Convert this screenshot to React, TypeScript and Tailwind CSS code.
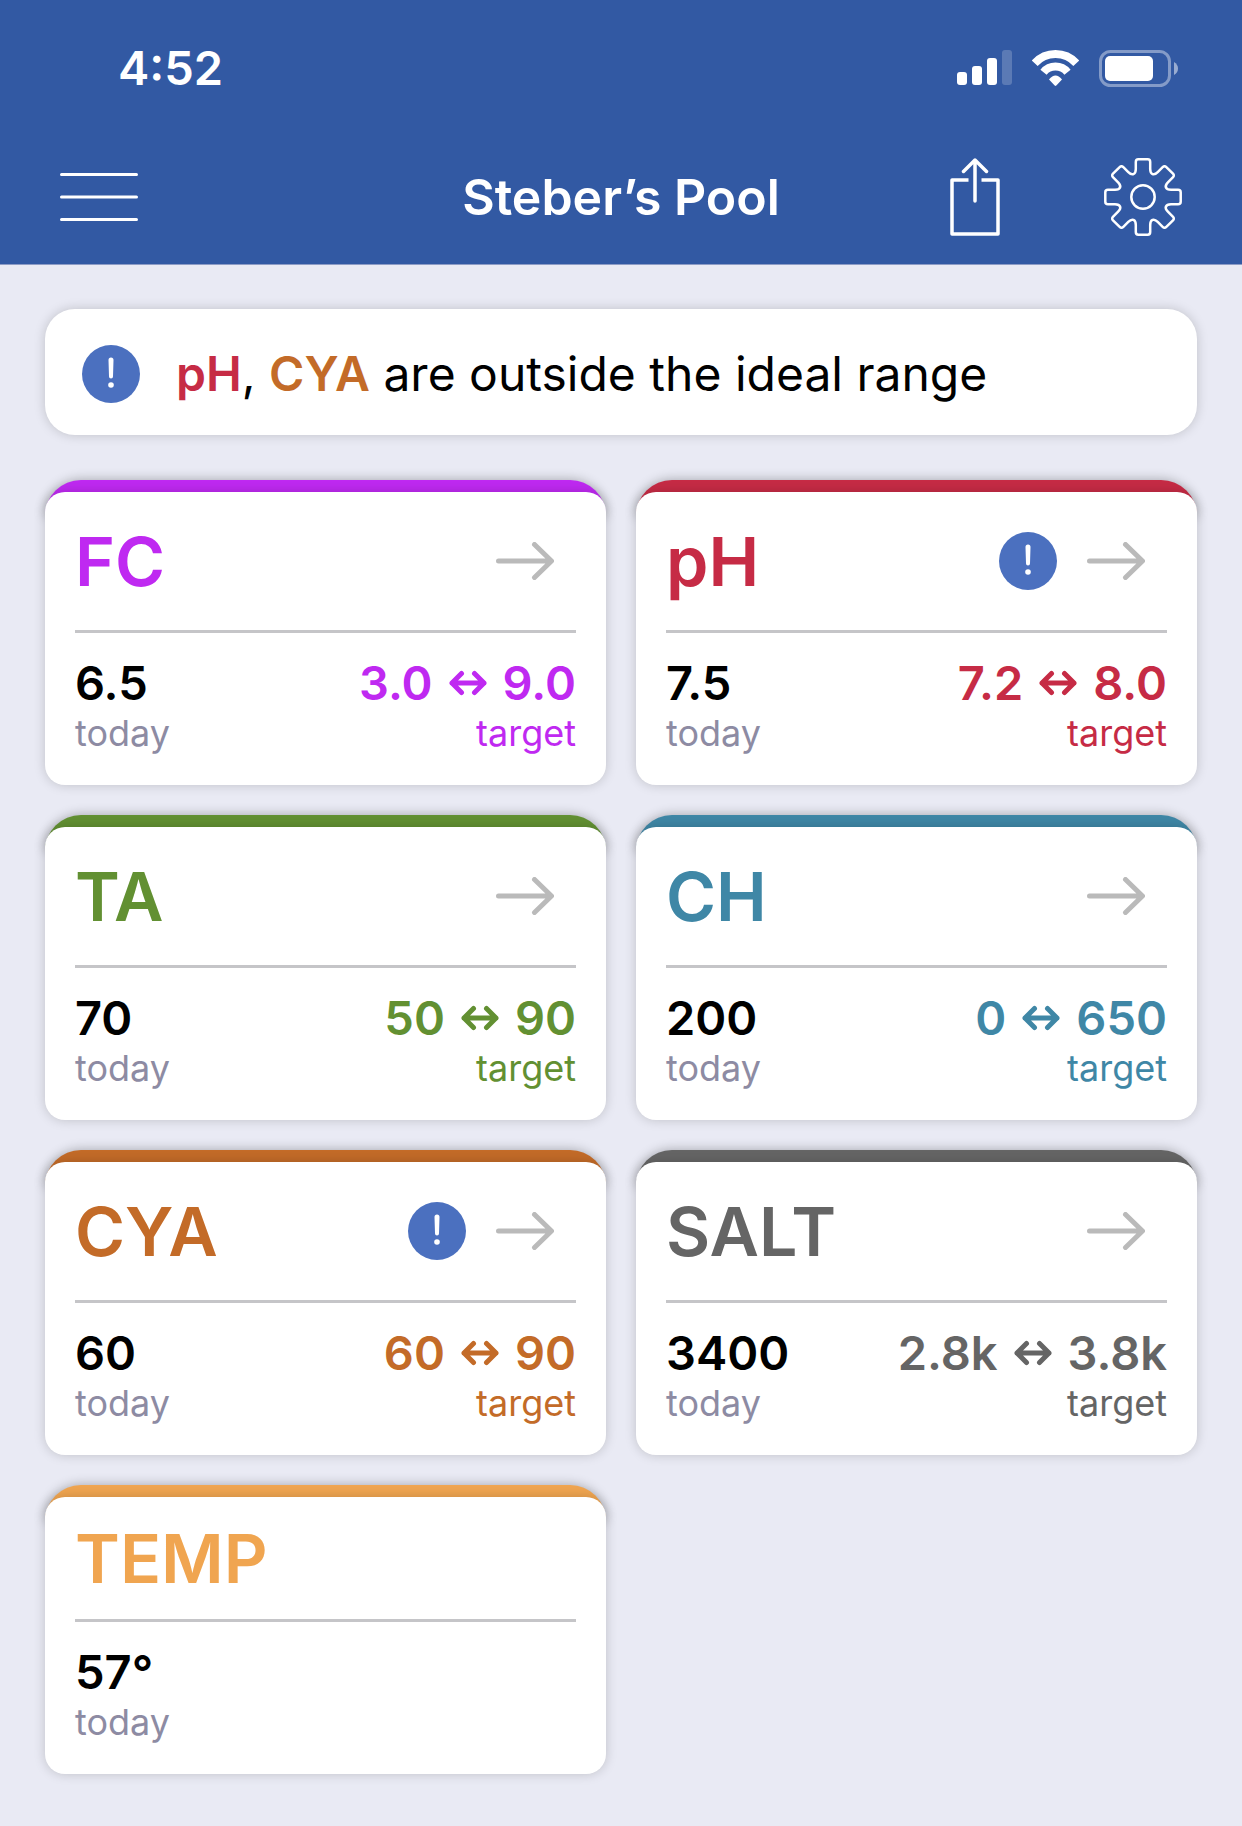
import clsx from 'clsx';

interface Reading {
  name: string;
  value: string;
  low?: string;
  high?: string;
  alert?: boolean;
  text: string;
  bar: string;
}

const readings: Reading[] = [
  { name: 'FC', value: '6.5', low: '3.0', high: '9.0', text: 'text-[#bf29f1]', bar: 'bg-[#bf29f1]' },
  { name: 'pH', value: '7.5', low: '7.2', high: '8.0', alert: true, text: 'text-[#c62b45]', bar: 'bg-[#c62b45]' },
  { name: 'TA', value: '70', low: '50', high: '90', text: 'text-[#629032]', bar: 'bg-[#629032]' },
  { name: 'CH', value: '200', low: '0', high: '650', text: 'text-[#3f87a6]', bar: 'bg-[#3f87a6]' },
  { name: 'CYA', value: '60', low: '60', high: '90', alert: true, text: 'text-[#c36b28]', bar: 'bg-[#c36b28]' },
  { name: 'SALT', value: '3400', low: '2.8k', high: '3.8k', text: 'text-[#656565]', bar: 'bg-[#656565]' },
  { name: 'TEMP', value: '57°', text: 'text-[#f0a550]', bar: 'bg-[#f0a550]' },
];

// One gear tooth is described pointing up, then turned around the centre
function gearPath() {
  const parts: string[] = [];
  for (let i = 0; i < 8; i++) {
    const a = (i * Math.PI) / 4;
    const p = (x: number, y: number) =>
      `${(x * Math.cos(a) - y * Math.sin(a)).toFixed(2)} ${(x * Math.sin(a) + y * Math.cos(a)).toFixed(2)}`;
    parts.push(
      `${i === 0 ? 'M' : 'L'}${p(-7.2, -28)} L${p(-7.2, -35)} Q${p(-7.2, -37.7)} ${p(-4.7, -37.7)}`,
      `L${p(4.7, -37.7)} Q${p(7.2, -37.7)} ${p(7.2, -35)} L${p(7.2, -28)}`,
      `C${p(7.2, -22.5)} ${p(10.82, -21)} ${p(14.71, -24.89)}`
    );
  }
  return parts.join(' ') + 'Z';
}

const GEAR = gearPath();

function StatusIcons() {
  return (
    <div className="flex items-center gap-5">
      <svg width="55" height="36" viewBox="0 0 55 36" fill="white" aria-hidden="true">
        <rect x="0" y="22" width="10" height="13" rx="3" />
        <rect x="15" y="16" width="10" height="19" rx="3" />
        <rect x="30" y="8" width="10" height="27" rx="3" />
        <rect x="45" y="0" width="10" height="35" rx="3" opacity="0.2" />
      </svg>
      <svg width="47" height="37" viewBox="0 0 47 37" fill="none" stroke="white" strokeWidth="8" aria-hidden="true">
        <path d="M2.7 13.3A28 28 0 0 1 44.3 13.3" />
        <path d="M11.5 22.3A15.5 15.5 0 0 1 35.5 22.3" />
        <path d="M17 29.5Q23.5 21.5 30 29.5L24.3 35.6Q23.5 36.4 22.7 35.6Z" fill="white" stroke="none" />
      </svg>
      <svg width="79" height="37" viewBox="0 0 79 37" fill="none" aria-hidden="true">
        <rect x="1.5" y="1.5" width="69" height="34" rx="10" stroke="white" strokeOpacity="0.4" strokeWidth="3" />
        <rect x="6" y="6" width="48" height="25" rx="5" fill="white" />
        <path d="M75 12Q79 14.5 79 18.5Q79 22.5 75 25Z" fill="white" fillOpacity="0.5" />
      </svg>
    </div>
  );
}

function AlertBadge() {
  return (
    <svg width="58" height="58" viewBox="0 0 58 58" className="shrink-0" role="img" aria-label="Alert">
      <circle cx="29" cy="29" r="29" fill="#4b70bf" />
      <path d="M26.5 15a2.5 2.5 0 0 1 5 0L31 31.6a2 2 0 0 1-4 0Z" fill="white" />
      <circle cx="29" cy="40" r="2.8" fill="white" />
    </svg>
  );
}

function TrendArrow() {
  return (
    <svg width="58" height="38" viewBox="0 0 58 38" fill="none" stroke="#bababa" strokeWidth="5" strokeLinecap="round" strokeLinejoin="round" aria-hidden="true">
      <path d="M2.5 19H55M38.5 2.5L55.5 19L38.5 35.5" />
    </svg>
  );
}

function RangeArrow() {
  return (
    <svg width="38" height="26" viewBox="0 0 38 26" fill="none" stroke="currentColor" strokeWidth="5" strokeLinecap="round" strokeLinejoin="round" aria-hidden="true">
      <path d="M3 13H35M12.5 3.5L3 13L12.5 22.5M25.5 3.5L35 13L25.5 22.5" />
    </svg>
  );
}

function ReadingCard({ reading }: { reading: Reading }) {
  const { name, value, low, high, alert, text, bar } = reading;

  return (
    <article>
      <div className={clsx('h-9 rounded-t-[36px] shadow-[0_0_12px_rgba(0,0,0,0.3)]', bar)} />
      <div className="relative -mt-6 rounded-[20px] bg-white px-[30px] shadow-[0_0_12px_rgba(0,0,0,0.18)]">
        <div
          className={clsx(
            'flex items-center justify-between border-b-3 border-[#c5c5c8] pr-[22px]',
            low ? 'py-[27px]' : 'py-[19px]'
          )}
        >
          <h2 className={clsx('text-[68px] leading-[84px] font-semibold', text)}>{name}</h2>
          {low && (
            <div className="flex items-center gap-[30px]">
              {alert && <AlertBadge />}
              <TrendArrow />
            </div>
          )}
        </div>
        <div className="flex justify-between pt-5 pb-8">
          <div>
            <p className="text-[47px] leading-[60px] font-semibold text-black">{value}</p>
            <p className="text-4xl leading-10 text-[#8d8ba3]">today</p>
          </div>
          {low && (
            <div className={clsx('text-right', text)}>
              <p className="flex items-center gap-4 text-[47px] leading-[60px] font-semibold">
                {low}
                <RangeArrow />
                {high}
              </p>
              <p className="text-4xl leading-10">target</p>
            </div>
          )}
        </div>
      </div>
    </article>
  );
}

export default function App() {
  return (
    <div className="min-h-screen bg-[#e9eaf4] font-['Inter',sans-serif]">
      <header className="border-b border-[#8d9cc6] bg-[#3259a3] text-white">
        {/* Status bar */}
        <div className="flex h-[130px] items-center justify-between pt-1.5 pr-16 pl-[118px]">
          <time className="text-[47px] font-semibold">4:52</time>
          <StatusIcons />
        </div>

        {/* Navigation */}
        <nav className="grid h-[134px] grid-cols-[1fr_auto_1fr] items-center px-[60px]">
          <button type="button" aria-label="Menu" className="justify-self-start">
            <svg width="78" height="50" viewBox="0 0 78 50" stroke="white" strokeWidth="3" strokeLinecap="round">
              <path d="M1.5 2.5H76.5M1.5 25H76.5M1.5 47.5H76.5" />
            </svg>
          </button>
          <h1 className="text-[50px] font-semibold">Steber’s Pool</h1>
          <div className="flex items-center gap-[104px] justify-self-end">
            <button type="button" aria-label="Share">
              <svg width="50" height="78" viewBox="0 0 50 78" fill="none" stroke="white" strokeWidth="3.5">
                <path d="M18.5 22H2V76H48V22H31.5" strokeLinejoin="round" />
                <path d="M25 2.5V43M13.5 13.5L25 2L36.5 13.5" strokeLinecap="round" strokeLinejoin="round" />
              </svg>
            </button>
            <button type="button" aria-label="Settings">
              <svg width="78" height="78" viewBox="-39 -39 78 78" fill="none" stroke="white" strokeWidth="2.5" strokeLinejoin="round">
                <path d={GEAR} />
                <circle r="11.7" />
              </svg>
            </button>
          </div>
        </nav>
      </header>

      <main className="px-[45px] pt-11 pb-[52px]">
        <div role="status" className="mb-[45px] flex min-h-[126px] items-center gap-9 rounded-[30px] bg-white px-[37px] pt-1 shadow-[0_0_12px_rgba(0,0,0,0.18)]">
          <AlertBadge />
          <p className="text-5xl leading-[60px] text-black">
            <span className="font-semibold text-[#c62b45]">pH</span>,{' '}
            <span className="font-semibold text-[#c36b28]">CYA</span> are outside the ideal range
          </p>
        </div>

        <div className="grid grid-cols-2 items-start gap-[30px]">
          {readings.map((reading) => (
            <ReadingCard key={reading.name} reading={reading} />
          ))}
        </div>
      </main>
    </div>
  );
}
